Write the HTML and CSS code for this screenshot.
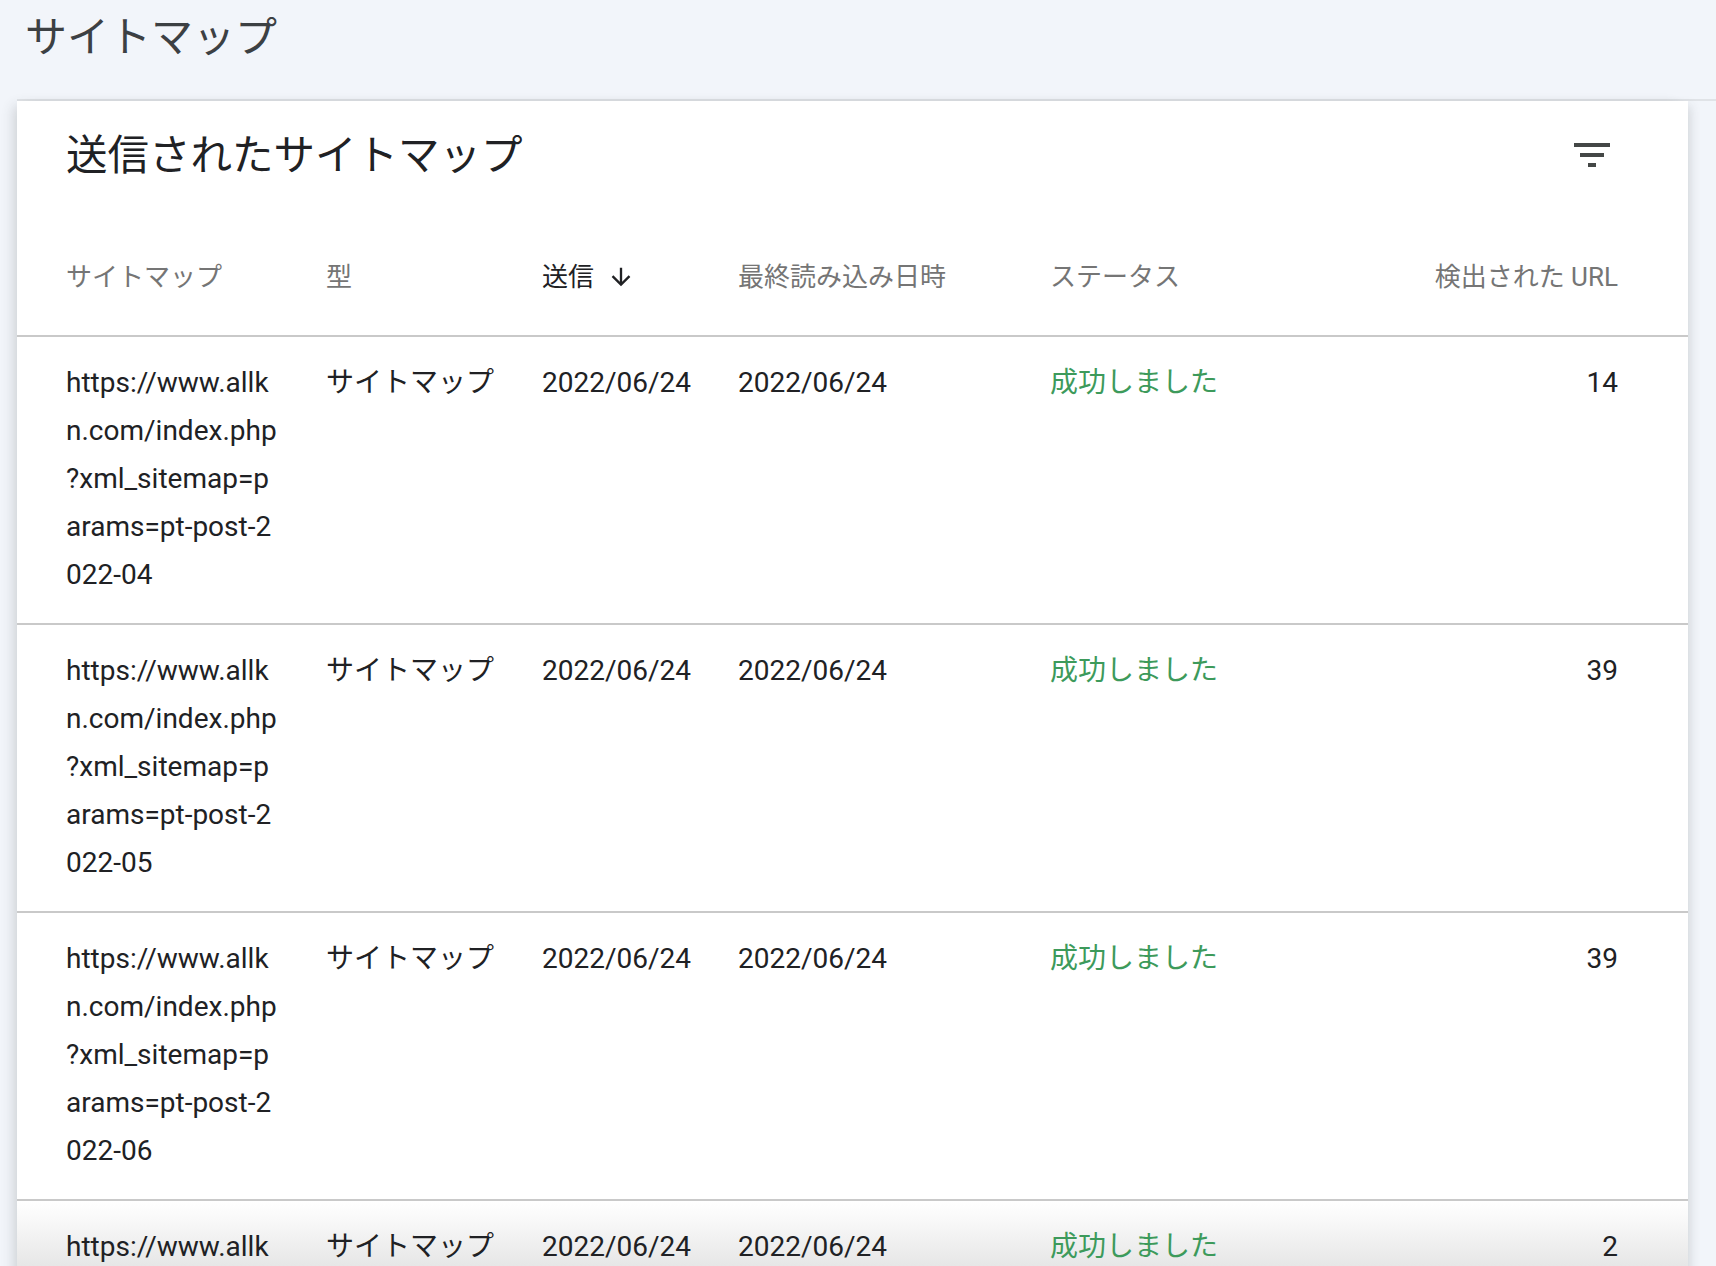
FILE: index.html
```html
<!DOCTYPE html>
<html lang="ja">
<head>
<meta charset="utf-8">
<title>サイトマップ</title>
<link rel="stylesheet" href="styles.css">
</head>
<body>
<header class="page-head">
  <h1 class="page-title">サイトマップ</h1>
</header>
<main class="content">
  <section class="card">
    <div class="card-head">
      <h2 class="card-title">送信されたサイトマップ</h2>
      <button class="icon-btn" aria-label="フィルタ">
        <svg width="48" height="48" viewBox="0 0 24 24"><path d="M10 18h4v-2h-4v2zM3 6v2h18V6H3zm3 7h12v-2H6v2z" fill="currentColor"/></svg>
      </button>
    </div>
    <div class="table">
      <div class="row head">
        <div class="cell">サイトマップ</div>
        <div class="cell">型</div>
        <div class="cell sorted">送信<svg class="sort-arrow" width="28" height="28" viewBox="0 0 24 24"><path d="M20 12l-1.41-1.41L13 16.17V4h-2v12.17l-5.58-5.59L4 12l8 8 8-8z" fill="currentColor"/></svg></div>
        <div class="cell">最終読み込み日時</div>
        <div class="cell">ステータス</div>
        <div class="cell num">検出された URL</div>
      </div>
      <div class="row">
        <div class="cell url">https://www.allkn.com/index.php?xml_sitemap=params=pt-post-2022-04</div>
        <div class="cell">サイトマップ</div>
        <div class="cell">2022/06/24</div>
        <div class="cell">2022/06/24</div>
        <div class="cell ok">成功しました</div>
        <div class="cell num">14</div>
      </div>
      <div class="row">
        <div class="cell url">https://www.allkn.com/index.php?xml_sitemap=params=pt-post-2022-05</div>
        <div class="cell">サイトマップ</div>
        <div class="cell">2022/06/24</div>
        <div class="cell">2022/06/24</div>
        <div class="cell ok">成功しました</div>
        <div class="cell num">39</div>
      </div>
      <div class="row">
        <div class="cell url">https://www.allkn.com/index.php?xml_sitemap=params=pt-post-2022-06</div>
        <div class="cell">サイトマップ</div>
        <div class="cell">2022/06/24</div>
        <div class="cell">2022/06/24</div>
        <div class="cell ok">成功しました</div>
        <div class="cell num">39</div>
      </div>
      <div class="row fading">
        <div class="cell url">https://www.allkn.com/index.php?xml_sitemap=params=pt-post-2022-07</div>
        <div class="cell">サイトマップ</div>
        <div class="cell">2022/06/24</div>
        <div class="cell">2022/06/24</div>
        <div class="cell ok">成功しました</div>
        <div class="cell num">2</div>
      </div>
    </div>
  </section>
</main>
</body>
</html>
```
FILE: styles.css
```css
* { box-sizing: border-box; }

html, body {
  margin: 0;
  height: 100%;
  overflow: hidden;
}

body {
  background: #f2f5fa;
  font-family: Roboto, "Noto Sans CJK JP", sans-serif;
  color: #202124;
}

.page-head {
  height: 99px;
  padding: 13px 0 0 25px;
}

.page-title {
  margin: 0;
  font-size: 42px;
  line-height: 50px;
  font-weight: 400;
  color: #3c4043;
}

.content {
  margin-left: 17px;
  border-top: 2px solid #e0e3e7;
}

.card {
  width: 1671px;
  background: #fff;
  box-shadow: -8px 0 12px -5px rgba(60, 64, 67, 0.2), 7px 0 10px -5px rgba(60, 64, 67, 0.18);
}

.card-head {
  display: flex;
  justify-content: space-between;
  align-items: center;
  height: 83px;
  padding: 27px 72px 0 49px;
}

.card-title {
  margin: 0;
  font-size: 41.5px;
  line-height: 56px;
  font-weight: 400;
  color: #202124;
}

.icon-btn {
  width: 48px;
  height: 48px;
  padding: 0;
  border: 0;
  background: none;
  color: #444746;
  display: flex;
  margin-top: -2px;
}

.row {
  display: grid;
  grid-template-columns: 260px 216px 196px 312px 1fr auto;
  padding: 22px 70px 24px 49px;
  border-bottom: 2px solid #c9c9c9;
  font-size: 28px;
  line-height: 48px;
  color: #202124;
}

.row.head {
  padding-top: 69px;
  padding-bottom: 34px;
  font-size: 26px;
  color: #757575;
}

.cell.url {
  max-width: 214px;
  word-break: break-all;
  line-break: anywhere;
  overflow-wrap: anywhere;
}

.cell.num {
  text-align: right;
}

.cell.ok {
  color: #3d9a5b;
}

.sorted {
  color: #202124;
  display: flex;
  align-items: center;
}

.sort-arrow {
  margin-left: 13px;
}

.row.fading {
  background: linear-gradient(#ffffff, #f7f7f7 35%, #e6e6e6) 0 0 / 100% 66px no-repeat;
}
```
